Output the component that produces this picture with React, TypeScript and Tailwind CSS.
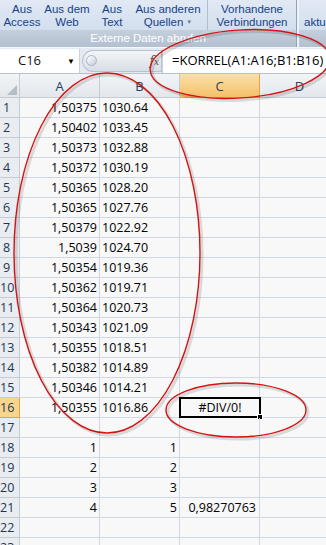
import React from "react";

// ── Data ──────────────────────────────────────────────────────────────────────
const colA = [
  "1,50375", "1,50402", "1,50373", "1,50372", "1,50365", "1,50365", "1,50379", "1,5039",
  "1,50354", "1,50362", "1,50364", "1,50343", "1,50355", "1,50382", "1,50346", "1,50355",
];
const colB = [
  "1030.64", "1033.45", "1032.88", "1030.19", "1028.20", "1027.76", "1022.92", "1024.70",
  "1019.36", "1019.71", "1020.73", "1021.09", "1018.51", "1014.89", "1014.21", "1016.86",
];

type Row = { a?: string; b?: string; bLeft?: boolean; c?: string };

const rows: Row[] = [];
for (let i = 0; i < 16; i++) rows.push({ a: colA[i], b: colB[i], bLeft: true });
rows.push({});
rows.push({ a: "1", b: "1" });
rows.push({ a: "2", b: "2" });
rows.push({ a: "3", b: "3" });
rows.push({ a: "4", b: "5", c: "0,98270763" });
rows.push({});
rows.push({});

const ribbonButtons = [
  { l1: "Aus", l2: "Access", w: "w-[44px]" },
  { l1: "Aus dem", l2: "Web", w: "w-[46px]" },
  { l1: "Aus", l2: "Text", w: "w-[44px]" },
  { l1: "Aus anderen", l2: "Quellen", w: "w-[68px]", arrow: true },
];

export default function App() {
  return (
    <div className="relative w-[326px] h-[545px] overflow-hidden bg-[#f8f8f8] font-['Open_Sans',sans-serif] text-[12.5px]">
      {/* ── Ribbon ─────────────────────────────────────────────────────────── */}
      <div className="flex h-[47px] bg-[#cfdae7] font-['Liberation_Sans',sans-serif]">
        <div className="flex flex-col w-[296px]">
          <div className="flex h-[30px] bg-gradient-to-b from-[#e1e9f4] to-[#d3dfee] text-[#15428b] text-[11.5px] leading-[13px]">
            {ribbonButtons.map((b) => (
              <div
                key={b.l1 + b.l2}
                className={`${b.w} flex flex-col items-center shrink-0 pt-[3px] whitespace-nowrap`}
              >
                <span>{b.l1}</span>
                <span className="flex items-center gap-[3px]">
                  {b.l2}
                  {b.arrow && <span className="text-[6px] text-[#6b7c93]">▼</span>}
                </span>
              </div>
            ))}
            <div className="w-[5px] shrink-0" />
            <div className="w-[1px] h-[30px] bg-[#aebfd3]" />
            <div className="flex flex-col items-center w-[88px] pt-[3px]">
              <span>Vorhandene</span>
              <span>Verbindungen</span>
            </div>
          </div>
          <div className="h-[17px] flex items-center justify-center bg-gradient-to-b from-[#c4cfdc] to-[#b3c0cf] text-white text-[11.5px] leading-none">
            Externe Daten abrufen
          </div>
        </div>
        <div className="w-[1px] bg-[#8fa3bb]" />
        <div className="w-[2px] bg-[#eef2f7]" />
        <div className="flex-1 flex flex-col">
          <div className="h-[30px] bg-gradient-to-b from-[#e1e9f4] to-[#d3dfee] text-[#15428b] text-[11.5px] leading-[13px] pt-[16px] pl-[5px]">
            aktu
          </div>
          <div className="h-[17px] bg-gradient-to-b from-[#c4cfdc] to-[#b3c0cf]" />
        </div>
      </div>

      {/* ── Formula bar ────────────────────────────────────────────────────── */}
      <div className="flex items-center h-[27px] bg-[#e4eaf2] border-t border-[#f4f7fb] border-b border-b-[#b6c2d0]">
        <div className="flex items-center h-[24px] w-[80px] bg-white border-r border-[#c9d3df] pl-[18px] text-[13px] text-[#111]">
          <span className="flex-1">C16</span>
          <span className="text-[8px] mr-[4px] text-black">▼</span>
        </div>
        <div className="flex items-center h-[22px] ml-[2px] w-[80px] rounded-l-full rounded-r-[3px] bg-gradient-to-b from-[#f3f5f8] to-[#d9dee5] border border-[#b9c3cf]">
          <div className="w-[11px] h-[11px] ml-[3px] rounded-full bg-gradient-to-br from-white to-[#c7ced8] border border-[#aab4c1]" />
          <span className="ml-auto mr-[2px] font-['DejaVu_Serif',serif] italic text-[12px] text-[#555] leading-none">
            f<span className="text-[9px]">x</span>
          </span>
        </div>
        <div className="flex items-center h-[24px] flex-1 bg-white border-l border-[#c9d3df] pl-[9px] text-[13px] text-black whitespace-nowrap overflow-hidden">
          =KORREL(A1:A16;B1:B16)
        </div>
      </div>

      {/* ── Column headers ─────────────────────────────────────────────────── */}
      <div className="flex h-[24px] text-[#27415f] text-[13px]">
        <div className="relative w-[20px] shrink-0 bg-gradient-to-b from-[#f2f4f7] to-[#e3e7ec] border-r border-b border-[#c5cbd3]">
          <div className="absolute right-[2px] bottom-[2px] w-0 h-0 border-l-[10px] border-l-transparent border-b-[10px] border-b-[#b4bcc6]" />
        </div>
        {["A", "B", "C", "D"].map((c) => (
          <div
            key={c}
            className={`w-[80px] shrink-0 flex items-end justify-center pb-[1px] border-r border-b ${
              c === "C"
                ? "bg-gradient-to-b from-[#fbe0a8] to-[#f3c168] border-[#e5a24a]"
                : "bg-gradient-to-b from-[#f2f4f7] to-[#e3e7ec] border-[#c5cbd3]"
            }`}
          >
            {c}
          </div>
        ))}
      </div>

      {/* ── Rows ───────────────────────────────────────────────────────────── */}
      {rows.map((r, i) => {
        const n = i + 1;
        const sel = n === 16;
        return (
          <div key={n} className="flex h-[20px] leading-[19px] text-black">
            <div
              className={`w-[20px] shrink-0 border-r border-b pr-[6px] text-center text-[#22364f] whitespace-nowrap ${
                sel ? "bg-[#f8d58e] border-[#e5a24a]" : "bg-[#e9ecf0] border-[#c5cbd3]"
              }`}
            >
              {n}
            </div>
            <div className="w-[80px] shrink-0 border-r border-b border-[#d0d7e5] text-right pr-[2px]">{r.a}</div>
            <div
              className={`w-[80px] shrink-0 border-r border-b border-[#d0d7e5] ${
                r.bLeft ? "text-left pl-[2px]" : "text-right pr-[2px]"
              }`}
            >
              {r.b}
            </div>
            <div
              className={`relative w-[80px] shrink-0 border-r border-b border-[#d0d7e5] ${
                r.c ? "text-right pr-[3px]" : ""
              }`}
            >
              {r.c}
              {sel && (
                <div className="absolute left-[-1px] top-[-1px] w-[82px] h-[21px] border-2 border-black text-center leading-[17px]">
                  #DIV/0!
                  <div className="absolute right-[-4px] bottom-[-4px] w-[6px] h-[6px] bg-black border border-white" />
                </div>
              )}
            </div>
            <div className="w-[80px] shrink-0 border-r border-b border-[#d0d7e5]" />
          </div>
        );
      })}

      {/* ── Red annotations ────────────────────────────────────────────────── */}
      <svg className="absolute inset-0 pointer-events-none" width="326" height="545">
        <g fill="none" strokeWidth="3" stroke="#000" opacity="0.12">
          <ellipse cx="242" cy="66" rx="90" ry="34" transform="rotate(-4 242 66)" />
          <ellipse cx="109" cy="255" rx="93" ry="180" />
          <ellipse cx="238" cy="412" rx="70" ry="27" />
        </g>
        <g fill="none" strokeWidth="1.4" stroke="#d41414">
          <ellipse cx="240" cy="64" rx="90" ry="34" transform="rotate(-4 240 64)" />
          <ellipse cx="107" cy="253" rx="93" ry="180" />
          <ellipse cx="236" cy="410" rx="70" ry="27" />
        </g>
      </svg>
    </div>
  );
}
